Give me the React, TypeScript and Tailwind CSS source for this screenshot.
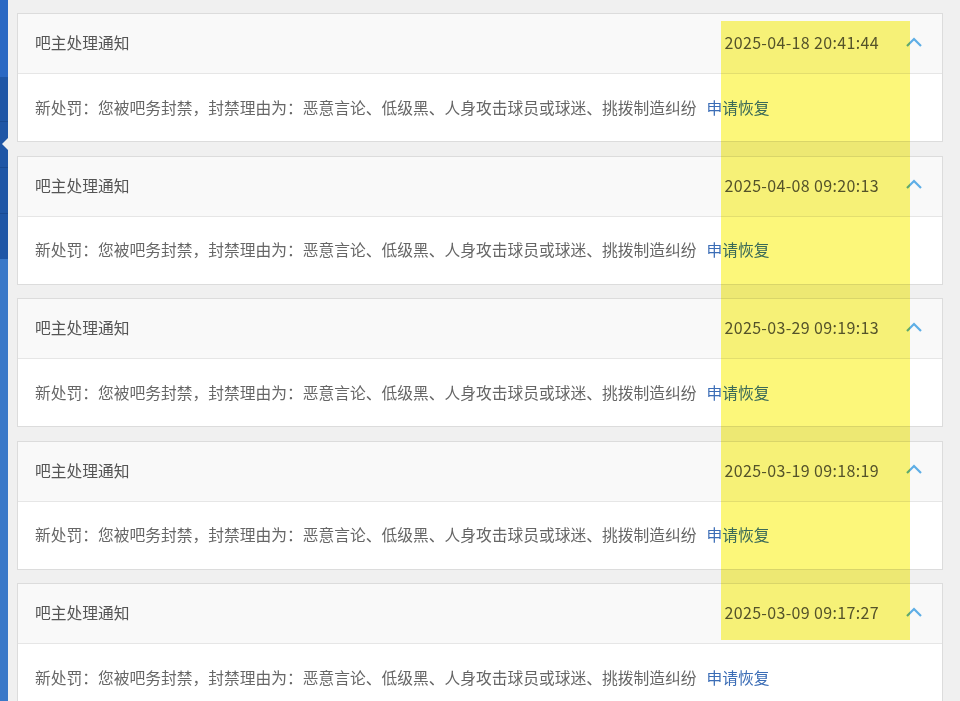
import React from "react";

const dates = [
  "2025-04-18 20:41:44",
  "2025-04-08 09:20:13",
  "2025-03-29 09:19:13",
  "2025-03-19 09:18:19",
  "2025-03-09 09:17:27",
];

function Chevron() {
  return (
    <svg width="18" height="10" viewBox="0 0 18 10" className="block">
      <path d="M2 9 L9 2 L16 9" fill="none" stroke="#5eaee6" strokeWidth="2.2" />
    </svg>
  );
}

function Card({ date }: { date: string }) {
  return (
    <div className="border border-[#dcdcdc] bg-white">
      <div className="flex h-[59px] items-center bg-[#f9f9f9] pl-[17px] pr-[19px] text-[15.75px] text-[#555]">
        <span className="flex-1 mt-[-1px]">吧主处理通知</span>
        <span className="mt-[-3px] font-['Noto_Sans_CJK_SC',sans-serif] text-[16px] tracking-[0.35px] text-[#555]">{date}</span>
        <span className="ml-[26px] mt-[-4px]">
          <Chevron />
        </span>
      </div>
      <div className="flex h-[68px] items-center border-t border-[#e6e6e6] pl-[17px] text-[15.75px] text-[#666]">
        <span>新处罚：您被吧务封禁，封禁理由为：恶意言论、低级黑、人身攻击球员或球迷、挑拨制造纠纷</span>
        <a className="ml-[10px] cursor-pointer text-[#3b6db6]">申请恢复</a>
      </div>
    </div>
  );
}

export default function App() {
  return (
    <div className="relative flex h-[701px] w-[960px] overflow-hidden bg-[#f0f0f0] font-['Microsoft_YaHei','Noto_Sans_CJK_SC',sans-serif]">
      <div className="flex w-[8px] flex-col">
        <div className="h-[77px] bg-[#2a68c3]" />
        <div className="h-[45px] border-b border-[#194a92] bg-[#1f56a6]" />
        <div className="relative h-[46px] border-b border-[#194a92] bg-[#1f56a6]">
          <div className="absolute right-0 top-[16px] h-0 w-0 border-y-[6px] border-r-[6px] border-y-transparent border-r-[#f0f0f0]" />
        </div>
        <div className="h-[46px] border-b border-[#194a92] bg-[#1f56a6]" />
        <div className="h-[45px] bg-[#1f56a6]" />
        <div className="flex-1 bg-[#3a78c8]" />
      </div>
      <div className="flex flex-1 flex-col gap-[13.5px] pl-[9px] pr-[17px] pt-[13px]">
        {dates.map((d) => (
          <Card key={d} date={d} />
        ))}
      </div>
      <div className="pointer-events-none absolute left-[721px] top-[21px] h-[619px] w-[189px] bg-[#fcf77a] mix-blend-multiply" />
    </div>
  );
}
